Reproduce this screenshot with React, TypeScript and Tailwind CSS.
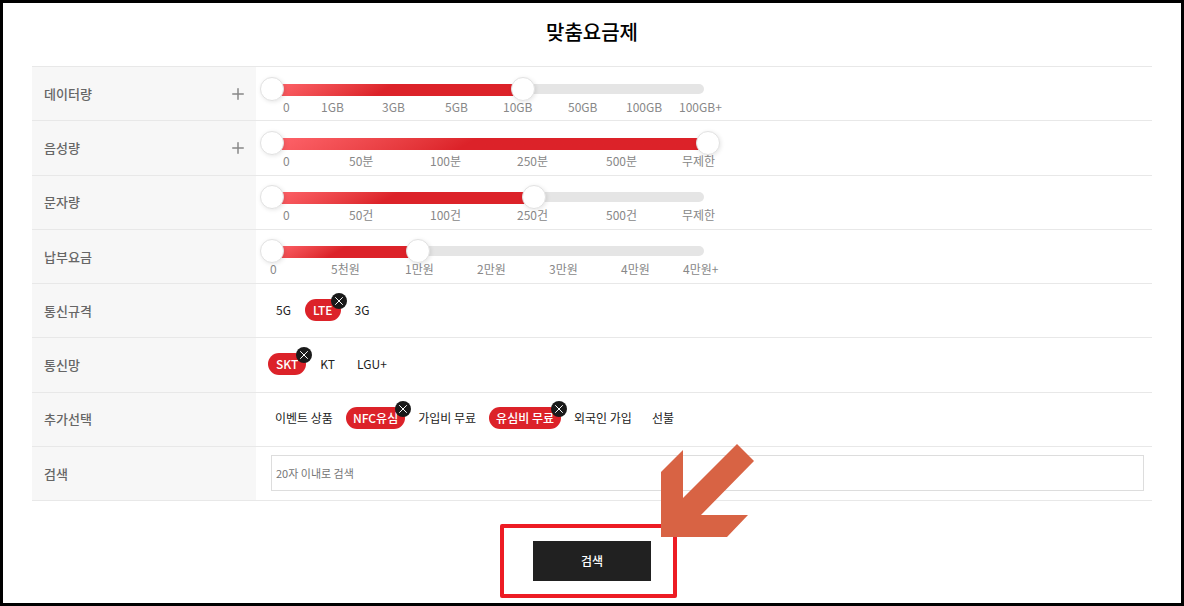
import { useState } from "react";
import { Plus, X } from "lucide-react";

type Scale = {
  name: string;
  expandable?: boolean;
  value: number;
  labels: string[];
  columns: string;
};

type Choice = {
  name: string;
  options: string[];
  selected: string[];
  padding: string;
};

const scales: Scale[] = [
  {
    name: "데이터량",
    expandable: true,
    value: 57.5,
    labels: ["0", "1GB", "3GB", "5GB", "10GB", "50GB", "100GB", "100GB+"],
    columns: "pl-[23px] grid-cols-[38px_61px_63px_58px_65px_58px_53px_auto]",
  },
  {
    name: "음성량",
    expandable: true,
    value: 100,
    labels: ["0", "50분", "100분", "250분", "500분", "무제한"],
    columns: "pl-[23px] grid-cols-[66px_81px_87px_89px_76px_auto]",
  },
  {
    name: "문자량",
    value: 60,
    labels: ["0", "50건", "100건", "250건", "500건", "무제한"],
    columns: "pl-[23px] grid-cols-[66px_81px_87px_89px_76px_auto]",
  },
  {
    name: "납부요금",
    value: 33.5,
    labels: ["0", "5천원", "1만원", "2만원", "3만원", "4만원", "4만원+"],
    columns: "pl-[10px] grid-cols-[61px_74px_72px_72px_72px_62px_auto]",
  },
];

const choices: Choice[] = [
  { name: "통신규격", options: ["5G", "LTE", "3G"], selected: ["LTE"], padding: "px-2" },
  { name: "통신망", options: ["SKT", "KT", "LGU+"], selected: ["SKT"], padding: "px-2" },
  {
    name: "추가선택",
    options: ["이벤트 상품", "NFC유심", "가입비 무료", "유심비 무료", "외국인 가입", "선불"],
    selected: ["NFC유심", "유심비 무료"],
    padding: "px-[7px]",
  },
];

const rangeClass =
  "pointer-events-none z-10 col-start-1 row-start-1 h-6 w-full appearance-none bg-transparent [&::-webkit-slider-thumb]:pointer-events-auto [&::-webkit-slider-thumb]:size-6 [&::-webkit-slider-thumb]:cursor-pointer [&::-webkit-slider-thumb]:appearance-none [&::-webkit-slider-thumb]:rounded-full [&::-webkit-slider-thumb]:border [&::-webkit-slider-thumb]:border-[#e2e2e2] [&::-webkit-slider-thumb]:bg-white [&::-webkit-slider-thumb]:shadow-[1px_1px_4px_rgba(0,0,0,0.1)]";

const rowClass = "h-[54px] border-y border-[#e8e8e8]";
const headClass =
  "w-56 bg-[#f7f7f7] pl-3 pr-[9px] text-left align-middle text-[13px] font-medium text-[#666]";

function RangeRow({ scale }: { scale: Scale }) {
  const [min, setMin] = useState(0);
  const [max, setMax] = useState(scale.value);

  return (
    <tr className={rowClass}>
      <th scope="row" className={headClass}>
        <div className="flex items-center justify-between">
          {scale.name}
          {scale.expandable && (
            <button type="button" aria-label={`${scale.name} 펼치기`} className="text-[#888]">
              <Plus size={18} strokeWidth={2} />
            </button>
          )}
        </div>
      </th>
      <td className="px-1 pt-0.5 align-middle">
        <div className="max-w-[460px]">
          <div className="grid items-start">
            <div className="col-start-1 row-start-1 ml-3 mr-4 mt-[7px] h-2.5 rounded-full bg-[#e5e5e5]" />
            <div className="col-start-1 row-start-1 mx-3 mt-[7px]">
              <div
                className="h-3 rounded-full bg-linear-150 from-[#ff646b] to-[#dc2229] to-45%"
                style={{ marginLeft: `${min}%`, width: `${max - min}%` }}
              />
            </div>
            <input
              type="range"
              step={0.5}
              aria-label={`${scale.name} 최소`}
              value={min}
              onChange={(e) => setMin(Math.min(Number(e.target.value), max))}
              className={rangeClass}
            />
            <input
              type="range"
              step={0.5}
              aria-label={`${scale.name} 최대`}
              value={max}
              onChange={(e) => setMax(Math.max(Number(e.target.value), min))}
              className={rangeClass}
            />
          </div>
          <div className={`grid whitespace-nowrap text-xs leading-3 text-[#888] ${scale.columns}`}>
            {scale.labels.map((label) => (
              <span key={label}>{label}</span>
            ))}
          </div>
        </div>
      </td>
    </tr>
  );
}

function ChoiceRow({ choice }: { choice: Choice }) {
  const [selected, setSelected] = useState(choice.selected);

  const toggle = (option: string) => {
    setSelected(
      selected.includes(option) ? selected.filter((item) => item !== option) : [...selected, option]
    );
  };

  return (
    <tr className={rowClass}>
      <th scope="row" className={headClass}>
        {choice.name}
      </th>
      <td className="px-3 pb-0.5 align-middle">
        <div className="flex flex-wrap gap-1.5">
          {choice.options.map((option) => {
            const active = selected.includes(option);
            return (
              <button
                key={option}
                type="button"
                aria-pressed={active}
                onClick={() => toggle(option)}
                className={`relative rounded-full text-xs leading-[22px] ${choice.padding} ${
                  active ? "bg-[#dc2229] font-medium text-white" : "text-[#222]"
                }`}
              >
                {option}
                {active && (
                  <span className="absolute -right-1.5 -top-1.5 flex size-4 items-center justify-center rounded-full bg-[#1a1a1a]">
                    <X size={14} strokeWidth={1.7} />
                  </span>
                )}
              </button>
            );
          })}
        </div>
      </td>
    </tr>
  );
}

export default function App() {
  return (
    <main className="min-h-screen border-3 border-black bg-white px-[29px] pt-[15px] font-['Noto_Sans_CJK_KR',sans-serif]">
      <h1 className="pb-5 text-center text-xl leading-7 font-medium text-black">맞춤요금제</h1>

      <form onSubmit={(e) => e.preventDefault()}>
        <table className="h-[435px] w-full border-collapse">
          <tbody>
            {scales.map((scale) => (
              <RangeRow key={scale.name} scale={scale} />
            ))}
            {choices.map((choice) => (
              <ChoiceRow key={choice.name} choice={choice} />
            ))}
            <tr className={rowClass}>
              <th scope="row" className={headClass}>
                <label htmlFor="keyword">검색</label>
              </th>
              <td className="pl-[15px] pr-2 align-middle">
                <input
                  id="keyword"
                  type="text"
                  maxLength={20}
                  placeholder="20자 이내로 검색"
                  className="block h-9 w-full border border-[#ddd] px-1 text-[11px] placeholder:text-[#757575]"
                />
              </td>
            </tr>
          </tbody>
        </table>

        <div className="mt-10 flex justify-center">
          <div className="relative">
            <button type="submit" className="block h-10 w-[118px] bg-[#212121] text-xs font-medium text-white">
              검색
            </button>
            <div className="pointer-events-none absolute -bottom-[17px] -left-[33px] -right-[26px] -top-[17px] rounded-xs border-4 border-[#ed1c24]" />
            <svg
              className="pointer-events-none absolute -top-[97px] left-32"
              width="93"
              height="93"
              viewBox="0 0 93 93"
              fill="#d86344"
              aria-hidden="true"
            >
              <path d="M76 0 93 17 40 71H87L66 93H0V28L22 6V54Z" />
            </svg>
          </div>
        </div>
      </form>
    </main>
  );
}
